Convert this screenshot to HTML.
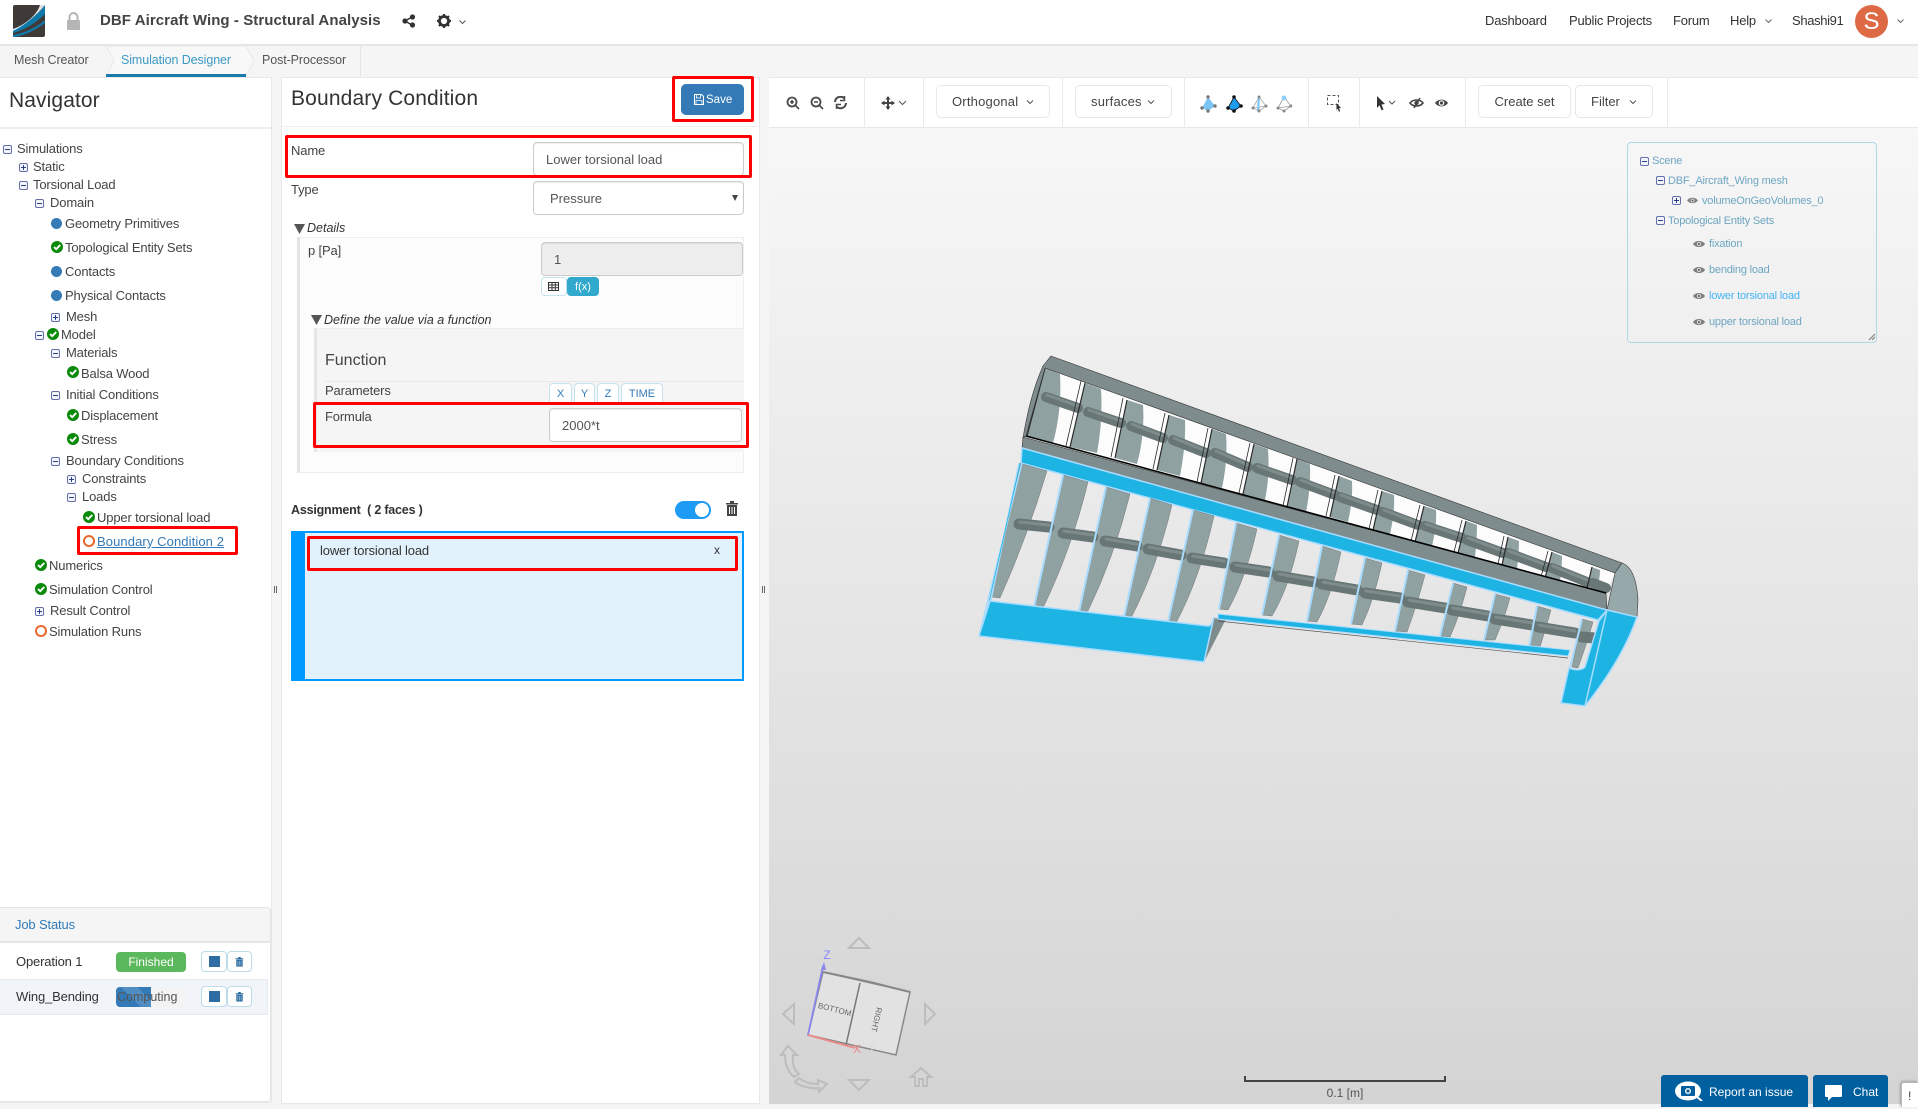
<!DOCTYPE html>
<html><head><meta charset="utf-8"><title>DBF Aircraft Wing - Structural Analysis</title>
<style>
html,body{margin:0;padding:0;width:1918px;height:1107px;overflow:hidden;background:#f5f5f5;font-family:"Liberation Sans",sans-serif;font-size:13px;color:#444}
.a{position:absolute;box-sizing:border-box}
.t{position:absolute;white-space:nowrap;height:18px;line-height:18px;letter-spacing:-.15px;margin-top:1px}
.m,.p{position:absolute;width:9px;height:9px;border:1px solid #6470ad;border-radius:2px;box-sizing:border-box;background:#f4f5fb}
.m:after,.p:after{content:"";position:absolute;left:1px;top:3px;width:5px;height:1px;background:#27408b}
.p:before{content:"";position:absolute;left:3px;top:1px;width:1px;height:5px;background:#27408b}
.d{position:absolute;width:11px;height:11px;border-radius:50%;background:#337ab7}
.r{position:absolute;width:12px;height:12px;border-radius:50%;border:2px solid #e8682c;box-sizing:border-box;background:#fff;margin-top:-1px}
.c{position:absolute;width:12px;height:12px;margin-top:-1px}
.red{position:absolute;box-sizing:border-box;border:3px solid #f00;border-radius:2px;z-index:5}
.inp{position:absolute;box-sizing:border-box;background:#fff;border:1px solid #ccc;border-radius:4px;font-size:13px;color:#555;line-height:34px;box-shadow:inset 0 1px 1px rgba(0,0,0,.075)}
.sep{position:absolute;top:77px;width:1px;height:51px;background:#eaeaea}
.btn{position:absolute;top:85px;height:33px;border:1px solid #e7e7e7;border-radius:5px;background:#fff;line-height:32px;color:#444;box-sizing:border-box;font-size:13px;white-space:nowrap;letter-spacing:.2px}
.pb{position:absolute;top:383px;height:19px;background:#fff;border:1px solid #c5e2ee;border-bottom:0;border-radius:4px 4px 0 0;color:#337ab7;font-size:11px;line-height:20px;text-align:center;box-sizing:border-box}
.s{position:absolute;color:#6ea6c2;font-size:11px;white-space:nowrap;height:16px;line-height:16px;letter-spacing:-.2px;margin-top:1px}
.n{position:absolute;top:12px;height:18px;line-height:18px;font-size:13px;color:#333;white-space:nowrap;letter-spacing:-.2px}
</style></head><body>
<svg width="0" height="0" style="position:absolute"><defs>
<symbol id="ck" viewBox="0 0 12 12"><circle cx="6" cy="6" r="6" fill="#0a8a0a"/><path d="M3 6l2.200 2.200L9.200 4" stroke="#fff" stroke-width="1.900" fill="none"/></symbol>
<symbol id="ey" viewBox="0 0 12 10"><path d="M0 5C2.500 1 9.500 1 12 5 9.500 9 2.500 9 0 5z" fill="#7f7f7f"/><circle cx="6" cy="5" r="2.100" fill="#dcdcdc"/><circle cx="6" cy="5" r="1.100" fill="#666"/></symbol>
<symbol id="tr" viewBox="0 0 14 16"><path d="M1 3h12v1.500H1zM5 1h4v2H5z" fill="#444"/><path d="M2 5h10v11H2z" fill="#444"/><path d="M4.500 7v7M7 7v7M9.500 7v7" stroke="#fff" stroke-width="1"/></symbol>
<symbol id="tb" viewBox="0 0 14 16"><path d="M1 3h12v1.500H1zM5 1h4v2H5z" fill="#2e6da4"/><path d="M2 5h10v11H2z" fill="#2e6da4"/><path d="M4.500 7v7M7 7v7M9.500 7v7" stroke="#a9c6de" stroke-width="1"/></symbol>
</defs></svg>

<!-- header -->
<div class="a" style="left:0;top:0;width:1918px;height:46px;background:#fff;border-bottom:2px solid #e6e6e6"></div>
<svg class="a" style="left:13px;top:5px" width="32" height="32" viewBox="0 0 32 32"><rect width="32" height="32" rx="2" fill="#3f3a37"/><path d="M0 24C12 20 24 10 32 0V9C24 17 12 25 0 28z" fill="#0f78ab"/><path d="M0 30C12 28 24 22 32 15v3C24 24 12 31 0 32z" fill="#0f78ab"/><path d="M0 24C12 20 24 10 27 0h5C24 10 12 20 0 26z" fill="#fff" opacity=".85"/></svg>
<svg class="a" style="left:66px;top:12px" width="15" height="18" viewBox="0 0 15 18"><path d="M3.500 8V5a4 4 0 018 0v3" stroke="#b5b5b5" stroke-width="2" fill="none"/><rect x="1" y="8" width="13" height="10" rx="1" fill="#b5b5b5"/></svg>
<div class="a" style="left:100px;top:11px;font-size:15px;font-weight:bold;color:#444;white-space:nowrap;line-height:20px;letter-spacing:.07px">DBF Aircraft Wing - Structural Analysis</div>
<svg class="a" style="left:402px;top:14px" width="14" height="14" viewBox="0 0 14 14"><circle cx="3" cy="7" r="2.600" fill="#333"/><circle cx="10.500" cy="3" r="2.600" fill="#333"/><circle cx="10.500" cy="11" r="2.600" fill="#333"/><path d="M3 7l7-4M3 7l7 4" stroke="#333" stroke-width="1.400"/></svg>
<svg class="a" style="left:437px;top:14px" width="14" height="14" viewBox="0 0 14 14"><circle cx="7" cy="7" r="4.500" fill="none" stroke="#333" stroke-width="2.800"/><path d="M7 0v3M7 11v3M0 7h3M11 7h3M2 2l2 2M10 10l2 2M12 2l-2 2M4 10l-2 2" stroke="#333" stroke-width="2.200"/></svg>
<svg class="a" style="left:459px;top:20px" width="7" height="5" viewBox="0 0 7 5"><path d="M.5.500l3 3 3-3" stroke="#555" fill="none"/></svg>
<div class="n" style="left:1485px">Dashboard</div>
<div class="n" style="left:1569px">Public Projects</div>
<div class="n" style="left:1673px">Forum</div>
<div class="n" style="left:1730px">Help</div>
<svg class="a" style="left:1765px;top:19px" width="7" height="5" viewBox="0 0 7 5"><path d="M.5.500l3 3 3-3" stroke="#666" fill="none"/></svg>
<div class="n" style="left:1792px;letter-spacing:-.35px">Shashi91</div>
<div class="a" style="left:1855px;top:5px;width:33px;height:33px;border-radius:50%;background:#dd6a45;color:#fff;font-size:24px;text-align:center;line-height:33px">S</div>
<svg class="a" style="left:1897px;top:19px" width="7" height="5" viewBox="0 0 7 5"><path d="M.5.500l3 3 3-3" stroke="#666" fill="none"/></svg>

<!-- tabs -->
<div class="a" style="left:14px;top:51px;font-size:12.500px;color:#555;line-height:18px;letter-spacing:-.1px">Mesh Creator</div>
<svg class="a" style="left:104px;top:46px" width="260" height="31" viewBox="0 0 260 31"><path d="M2 0H142l8 15-8 15H2l8-15z" fill="#f8f8f8" stroke="#e8e8e8"/><path d="M256.500 0v30" stroke="#e4e4e4"/></svg>
<div class="a" style="left:106px;top:74px;width:140px;height:3px;background:#1a7bab"></div>
<div class="a" style="left:121px;top:51px;font-size:12.500px;color:#3d9ac5;line-height:18px;letter-spacing:-.1px">Simulation Designer</div>
<div class="a" style="left:262px;top:51px;font-size:12.500px;color:#555;line-height:18px;letter-spacing:-.1px">Post-Processor</div>

<!-- navigator -->
<div class="a" style="left:0;top:77px;width:272px;height:1026px;background:#fff;border:1px solid #e8e8e8;border-left:0"></div>
<div class="a" style="left:0;top:127px;width:271px;height:2px;background:#eee"></div>
<div class="a" style="left:9px;top:88px;font-size:21px;color:#333;line-height:26px;letter-spacing:.1px">Navigator</div>

<i class="m" style="left:3px;top:145px"></i><div class="t" style="left:17px;top:139px">Simulations</div>
<i class="p" style="left:19px;top:163px"></i><div class="t" style="left:33px;top:157px">Static</div>
<i class="m" style="left:19px;top:181px"></i><div class="t" style="left:33px;top:175px">Torsional Load</div>
<i class="m" style="left:35px;top:199px"></i><div class="t" style="left:50px;top:193px">Domain</div>
<i class="d" style="left:51px;top:218px"></i><div class="t" style="left:65px;top:214px">Geometry Primitives</div>
<svg class="c" style="left:51px;top:242px"><use href="#ck"/></svg><div class="t" style="left:65px;top:238px">Topological Entity Sets</div>
<i class="d" style="left:51px;top:266px"></i><div class="t" style="left:65px;top:262px">Contacts</div>
<i class="d" style="left:51px;top:290px"></i><div class="t" style="left:65px;top:286px">Physical Contacts</div>
<i class="p" style="left:51px;top:313px"></i><div class="t" style="left:66px;top:307px">Mesh</div>
<i class="m" style="left:35px;top:331px"></i><svg class="c" style="left:47px;top:329px"><use href="#ck"/></svg><div class="t" style="left:61px;top:325px">Model</div>
<i class="m" style="left:51px;top:349px"></i><div class="t" style="left:66px;top:343px">Materials</div>
<svg class="c" style="left:67px;top:367px"><use href="#ck"/></svg><div class="t" style="left:81px;top:364px">Balsa Wood</div>
<i class="m" style="left:51px;top:391px"></i><div class="t" style="left:66px;top:385px">Initial Conditions</div>
<svg class="c" style="left:67px;top:410px"><use href="#ck"/></svg><div class="t" style="left:81px;top:406px">Displacement</div>
<svg class="c" style="left:67px;top:434px"><use href="#ck"/></svg><div class="t" style="left:81px;top:430px">Stress</div>
<i class="m" style="left:51px;top:457px"></i><div class="t" style="left:66px;top:451px">Boundary Conditions</div>
<i class="p" style="left:67px;top:475px"></i><div class="t" style="left:82px;top:469px">Constraints</div>
<i class="m" style="left:67px;top:493px"></i><div class="t" style="left:82px;top:487px">Loads</div>
<svg class="c" style="left:83px;top:512px"><use href="#ck"/></svg><div class="t" style="left:97px;top:508px">Upper torsional load</div>
<i class="r" style="left:83px;top:536px"></i><div class="t" style="left:97px;top:532px;color:#337ab7;text-decoration:underline;letter-spacing:.1px">Boundary Condition 2</div>
<div class="red" style="left:77px;top:526px;width:161px;height:29px"></div>
<svg class="c" style="left:35px;top:560px"><use href="#ck"/></svg><div class="t" style="left:49px;top:556px">Numerics</div>
<svg class="c" style="left:35px;top:584px"><use href="#ck"/></svg><div class="t" style="left:49px;top:580px">Simulation Control</div>
<i class="p" style="left:35px;top:607px"></i><div class="t" style="left:50px;top:601px">Result Control</div>
<i class="r" style="left:35px;top:626px"></i><div class="t" style="left:49px;top:622px">Simulation Runs</div>

<!-- job status -->
<div class="a" style="left:0;top:907px;width:271px;height:195px;border:1px solid #e4e4e4;border-left:0;border-radius:0 4px 4px 0;background:#fff"></div>
<div class="a" style="left:0;top:907px;width:270px;height:36px;background:#f5f5f5;border-bottom:2px solid #e6e6e6;border-top:1px solid #e4e4e4;border-radius:0 4px 0 0"></div>
<div class="t" style="left:15px;top:915px;color:#337ab7">Job Status</div>
<div class="a" style="left:0;top:979px;width:268px;height:36px;background:#f1f5fa;border:1px solid #e6e9ee;border-left:0"></div>
<div class="t" style="left:16px;top:952px;color:#333">Operation 1</div>
<div class="a" style="left:116px;top:952px;width:70px;height:20px;background:#5cb85c;border-radius:4px;color:#fff;font-size:12px;text-align:center;line-height:20px">Finished</div>
<div class="t" style="left:16px;top:987px;color:#333">Wing_Bending</div>
<div class="a" style="left:116px;top:987px;width:70px;height:20px;background:#f3f3f3;border-radius:4px;overflow:hidden"><div style="width:35px;height:20px;background:linear-gradient(45deg,#337ab7 45%,#4f8dc2 45%,#4f8dc2 75%,#337ab7 75%)"></div></div>
<div class="a" style="left:117px;top:987px;font-size:12.500px;line-height:20px;color:#555;white-space:nowrap">Computing</div>
<div class="a" style="left:201px;top:951px;width:26px;height:21px;border:1px solid #bcdcea;border-radius:4px;background:#fff"></div>
<div class="a" style="left:209px;top:956px;width:11px;height:11px;background:#2e6da4"></div>
<div class="a" style="left:227px;top:951px;width:25px;height:21px;border:1px solid #bcdcea;border-radius:4px;background:#fff"></div>
<svg class="a" style="left:235px;top:956px" width="9" height="11" viewBox="0 0 14 16"><use href="#tb"/></svg>
<div class="a" style="left:201px;top:986px;width:26px;height:21px;border:1px solid #bcdcea;border-radius:4px;background:#fff"></div>
<div class="a" style="left:209px;top:991px;width:11px;height:11px;background:#2e6da4"></div>
<div class="a" style="left:227px;top:986px;width:25px;height:21px;border:1px solid #bcdcea;border-radius:4px;background:#fff"></div>
<svg class="a" style="left:235px;top:991px" width="9" height="11" viewBox="0 0 14 16"><use href="#tb"/></svg>
<div class="a" style="left:274px;top:586px;width:3px;height:7px;border-left:1px solid #666;border-right:1px solid #666"></div>
<div class="a" style="left:762px;top:586px;width:3px;height:7px;border-left:1px solid #666;border-right:1px solid #666"></div>

<!-- middle panel -->
<div class="a" style="left:281px;top:77px;width:479px;height:1027px;background:#fff;border:1px solid #e8e8e8"></div>
<div class="a" style="left:282px;top:126px;width:477px;height:1px;background:#eee"></div>
<div class="a" style="left:291px;top:86px;font-size:21px;color:#333;line-height:26px;white-space:nowrap;letter-spacing:.15px">Boundary Condition</div>
<div class="a" style="left:681px;top:84px;width:63px;height:31px;background:#337ab7;border-radius:5px;color:#fff;font-size:11.500px;line-height:33px;padding-left:25px">Save</div>
<svg class="a" style="left:694px;top:94px" width="10" height="11" viewBox="0 0 10 11"><path d="M.5.500h7l2 2v8H.5z" fill="none" stroke="#fff"/><path d="M2.500 1v3h4V1M2 10V6.500h6V10" fill="none" stroke="#fff" stroke-width=".8"/></svg>
<div class="red" style="left:672px;top:76px;width:82px;height:46px"></div>
<div class="t" style="left:291px;top:141px">Name</div>
<div class="inp" style="left:533px;top:142px;width:211px;height:34px;padding-left:12px">Lower torsional load</div>
<div class="red" style="left:285px;top:135px;width:467px;height:43px"></div>
<div class="t" style="left:291px;top:180px">Type</div>
<div class="inp" style="left:533px;top:181px;width:211px;height:34px;padding-left:16px">Pressure</div>
<svg class="a" style="left:732px;top:195px" width="6" height="6" viewBox="0 0 6 6"><path d="M0 0h6L3 6z" fill="#444"/></svg>
<svg class="a" style="left:294px;top:224px" width="11" height="10" viewBox="0 0 11 10"><path d="M0 0h11L5.500 10z" fill="#555"/></svg>
<div class="t" style="left:307px;top:218px;font-style:italic;font-size:12.500px;color:#333;letter-spacing:0">Details</div>
<div class="a" style="left:297px;top:237px;width:447px;height:236px;background:#fcfcfc;border:1px solid #eee;border-left:3px solid #e6e6e6"></div>
<div class="t" style="left:308px;top:241px">p [Pa]</div>
<div class="inp" style="left:541px;top:242px;width:202px;height:34px;background:#eee;padding-left:12px">1</div>
<div class="a" style="left:541px;top:277px;width:26px;height:19px;border:1px solid #c5e2ee;border-radius:4px;background:#fff"></div>
<svg class="a" style="left:548px;top:282px" width="11" height="9" viewBox="0 0 11 9"><path d="M.5.500h10v8H.5zM.5 3h10M.5 5.700h10M4 .5v8M7.300.5v8" fill="none" stroke="#333"/></svg>
<div class="a" style="left:567px;top:277px;width:32px;height:19px;background:#31a9cc;border-radius:4px;color:#fff;font-size:11px;text-align:center;line-height:21px">f(x)</div>
<svg class="a" style="left:311px;top:315px" width="11" height="10" viewBox="0 0 11 10"><path d="M0 0h11L5.500 10z" fill="#555"/></svg>
<div class="t" style="left:324px;top:310px;font-style:italic;font-size:12.500px;color:#333;letter-spacing:0">Define the value via a function</div>
<div class="a" style="left:314px;top:328px;width:430px;height:124px;background:#f5f5f5;border-top:1px solid #eee;border-left:3px solid #e6e6e6"></div>
<div class="a" style="left:325px;top:351px;font-size:16px;color:#444;line-height:19px">Function</div>
<div class="a" style="left:325px;top:381px;width:418px;height:1px;background:#e8e8e8"></div>
<div class="t" style="left:325px;top:381px">Parameters</div>
<div class="pb" style="left:549px;width:23px">X</div><div class="pb" style="left:574px;width:21px">Y</div><div class="pb" style="left:597px;width:22px">Z</div><div class="pb" style="left:621px;width:42px">TIME</div>
<div class="t" style="left:325px;top:407px">Formula</div>
<div class="inp" style="left:549px;top:408px;width:193px;height:34px;padding-left:12px">2000*t</div>
<div class="red" style="left:313px;top:402px;width:436px;height:46px"></div>
<div class="t" style="left:291px;top:500px;font-weight:bold;font-size:12.500px;color:#333;letter-spacing:-.2px">Assignment &nbsp;( 2 faces )</div>
<div class="a" style="left:675px;top:501px;width:36px;height:18px;border-radius:9px;background:#1e9bf5"></div>
<div class="a" style="left:695px;top:503px;width:14px;height:14px;border-radius:50%;background:#fff"></div>
<svg class="a" style="left:725px;top:500px" width="14" height="16" viewBox="0 0 14 16"><use href="#tr"/></svg>
<div class="a" style="left:291px;top:531px;width:453px;height:150px;background:#e1f2fd;border:2px solid #0099ff;border-left:14px solid #0099ff"></div>
<div class="t" style="left:320px;top:541px;color:#333">lower torsional load</div>
<div class="t" style="left:714px;top:540px;color:#333;font-size:12px">x</div>
<div class="red" style="left:307px;top:536px;width:431px;height:35px"></div>

<!-- viewer -->
<div class="a" style="left:769px;top:128px;width:1149px;height:976px;background:linear-gradient(#f7f7f7,#d4d4d4)"></div>
<div class="a" style="left:769px;top:77px;width:1149px;height:51px;background:#fff;border-top:1px solid #e8e8e8;border-bottom:1px solid #e8e8e8"></div>
<svg class="a" style="left:786px;top:96px" width="65" height="15" viewBox="0 0 65 15" fill="none" stroke="#4a4a4a"><circle cx="6" cy="6" r="4.500" stroke-width="1.800"/><path d="M9.500 9.500l3.500 3.500M4 6h4M6 4v4" stroke-width="1.600"/><circle cx="30" cy="6" r="4.500" stroke-width="1.800"/><path d="M33.500 9.500l3.500 3.500M28 6h4" stroke-width="1.600"/><path d="M49 6a5.500 5.500 0 019.500-3.500M60 7a5.500 5.500 0 01-9.500 3.500" stroke-width="2"/><path d="M58.500 0v4.500h-4.500M50.500 13V8.500H55" stroke-width="1.500"/></svg>
<div class="sep" style="left:864px"></div>
<svg class="a" style="left:881px;top:96px" width="28" height="15" viewBox="0 0 28 15" fill="none"><path d="M7 1v12M1 7h12" stroke="#444" stroke-width="2"/><path d="M4.500 3.500L7 0l2.500 3.500zM4.500 10.500L7 14l2.500-3.500zM3.500 4.500L0 7l3.500 2.500zM10.500 4.500L14 7l-3.500 2.500z" fill="#444"/><path d="M18 5l3.500 3.500L25 5" stroke="#555"/></svg>
<div class="sep" style="left:923px"></div>
<div class="btn" style="left:936px;width:114px;padding-left:15px">Orthogonal</div>
<svg class="a" style="left:1026px;top:100px" width="8" height="5" viewBox="0 0 8 5"><path d="M1 .5l3 3 3-3" stroke="#555" fill="none"/></svg>
<div class="sep" style="left:1062px"></div>
<div class="btn" style="left:1075px;width:97px;padding-left:15px">surfaces</div>
<svg class="a" style="left:1147px;top:100px" width="8" height="5" viewBox="0 0 8 5"><path d="M1 .5l3 3 3-3" stroke="#555" fill="none"/></svg>
<div class="sep" style="left:1184px"></div>
<svg class="a" style="left:1200px;top:95px" width="92" height="18" viewBox="0 0 92 18">
<path d="M8 2L2 13l6 3 7-5z" fill="#7cc4f5"/><g fill="#777"><circle cx="8" cy="2" r="1.700"/><circle cx="2" cy="13" r="1.700"/><circle cx="8" cy="16" r="1.700"/><circle cx="15" cy="11" r="1.700"/></g>
<path d="M34 2l-6 11 6 3 7-5z" fill="#1e9bf0" stroke="#111" stroke-width=".8"/><g fill="#111"><circle cx="34" cy="2" r="1.800"/><circle cx="28" cy="13" r="1.800"/><circle cx="34" cy="16" r="1.800"/><circle cx="41" cy="11" r="1.800"/></g>
<path d="M59 2l-6 11 6 3 7-5zM59 2v14M53 13l13-2" fill="none" stroke="#aaa" stroke-width=".8"/><path d="M59 2l-1 14" stroke="#7cc4f5" stroke-width="2"/><g fill="#888"><circle cx="59" cy="2" r="1.500"/><circle cx="53" cy="13" r="1.500"/><circle cx="59" cy="16" r="1.500"/><circle cx="66" cy="11" r="1.500"/></g>
<path d="M84 2l-6 11 6 3 7-5z" fill="none" stroke="#999" stroke-width=".8"/><path d="M78 13l13-2" stroke="#999" stroke-width=".8"/><circle cx="84" cy="3" r="2.500" fill="#8fd0fb"/><g fill="#888"><circle cx="78" cy="13" r="1.500"/><circle cx="84" cy="16" r="1.500"/><circle cx="91" cy="11" r="1.500"/></g></svg>
<div class="sep" style="left:1308px"></div>
<svg class="a" style="left:1327px;top:95px" width="15" height="17" viewBox="0 0 15 17"><path d="M.5.500h11v9H.5z" fill="none" stroke="#555" stroke-dasharray="3 2"/><path d="M9.500 8l4.500 5-2 .3 1.200 3-1.200.5-1.300-3-1.200 1.200z" fill="#333"/></svg>
<div class="sep" style="left:1359px"></div>
<svg class="a" style="left:1376px;top:95px" width="80" height="16" viewBox="0 0 80 16"><path d="M1 1l8 8-3.500.5 2 5-2 .8-2-5L1 13z" fill="#333"/><path d="M13 6l3 3 3-3" stroke="#555" fill="none"/><path d="M34 8c3-4 10-4 13 0-3 4-10 4-13 0z" fill="none" stroke="#444" stroke-width="1.600"/><circle cx="40.500" cy="8" r="2.200" fill="#444"/><path d="M44 3l-6 10" stroke="#444" stroke-width="1.500"/><path d="M59 8c3-4.500 10-4.500 13 0-3 4.500-10 4.500-13 0z" fill="#444"/><circle cx="65.500" cy="8" r="2.800" fill="#fff"/><circle cx="65.500" cy="8" r="1.600" fill="#444"/></svg>
<div class="sep" style="left:1465px"></div>
<div class="btn" style="left:1478px;width:93px;text-align:center;letter-spacing:0">Create set</div>
<div class="btn" style="left:1575px;width:78px;padding-left:15px;letter-spacing:0">Filter</div>
<svg class="a" style="left:1629px;top:100px" width="8" height="5" viewBox="0 0 8 5"><path d="M1 .5l3 3 3-3" stroke="#555" fill="none"/></svg>
<div class="sep" style="left:1667px"></div>

<!-- scene tree -->
<div class="a" style="left:1627px;top:142px;width:250px;height:201px;border:1px solid #add8e6;border-radius:4px;background:rgba(255,255,255,.02)"></div>
<svg class="a" style="left:1868px;top:333px" width="8" height="8" viewBox="0 0 8 8"><path d="M1 7l6-6M4 7l3-3" stroke="#777" fill="none"/></svg>
<i class="m" style="left:1640px;top:157px"></i><div class="s" style="left:1652px;top:152px">Scene</div>
<i class="m" style="left:1656px;top:176px"></i><div class="s" style="left:1668px;top:172px">DBF_Aircraft_Wing mesh</div>
<i class="p" style="left:1672px;top:196px"></i><svg class="a" style="left:1687px;top:196px" width="11" height="9"><use href="#ey"/></svg><div class="s" style="left:1702px;top:192px">volumeOnGeoVolumes_0</div>
<i class="m" style="left:1656px;top:216px"></i><div class="s" style="left:1668px;top:212px">Topological Entity Sets</div>
<svg class="a" style="left:1693px;top:239px" width="12" height="10"><use href="#ey"/></svg><div class="s" style="left:1709px;top:235px">fixation</div>
<svg class="a" style="left:1693px;top:265px" width="12" height="10"><use href="#ey"/></svg><div class="s" style="left:1709px;top:261px">bending load</div>
<svg class="a" style="left:1693px;top:291px" width="12" height="10"><use href="#ey"/></svg><div class="s" style="left:1709px;top:287px;color:#45b4f5">lower torsional load</div>
<svg class="a" style="left:1693px;top:317px" width="12" height="10"><use href="#ey"/></svg><div class="s" style="left:1709px;top:313px">upper torsional load</div>

<!-- wing -->
<svg class="a" style="left:0;top:0" width="1918" height="1107" viewBox="0 0 1918 1107">
<!-- upper white openings -->
<path d="M1045 368L1615 573L1606 593L1026 436Z" fill="#fcfcfc"/>
<!-- upper ribs -->
<path fill="#90a1a2" d="M1045 368L1060 374Q1062 410 1053 443L1027 436ZM1085 383L1101 389Q1103 420 1097 453L1070 447ZM1127 400L1143 405Q1145 435 1137 464L1115 458ZM1169 415L1185 420Q1186 445 1180 476L1157 470ZM1212 429L1226 434Q1228 460 1222 488L1201 483ZM1254 444L1268 449Q1270 475 1265 500L1243 494ZM1297 459L1310 464Q1311 488 1306 512L1287 507ZM1339 476L1352 481Q1353 500 1348 522L1330 517ZM1382 491L1394 495Q1395 512 1390 534L1373 530ZM1424 506L1436 510Q1437 525 1432 546L1415 542ZM1466 521L1477 525Q1477 540 1475 557L1458 553ZM1508 537L1519 541Q1519 552 1517 569L1502 565ZM1552 552L1562 556Q1562 565 1560 582L1545 578ZM1592 567L1600 570Q1600 578 1597 590L1587 588Z"/>
<!-- upper rods -->
<g stroke-linecap="round" stroke="#697676" stroke-width="10">
<path d="M1046 397L1078 408M1088 412L1121 423M1131 426L1163 438M1173 440L1206 453M1215 453L1248 467M1257 468L1292 480M1300 482L1335 495M1340 497L1377 510M1383 512L1418 525M1425 526L1462 538M1467 540L1503 553M1508 553L1546 567M1552 568L1587 582M1593 583L1606 588"/></g>
<g stroke-linecap="round" stroke="#7f8c8c" stroke-width="3">
<path d="M1047 395L1078 406M1089 410L1121 421M1132 424L1163 436M1174 438L1206 451M1216 451L1248 465M1258 466L1292 478M1301 480L1335 493M1341 495L1377 508M1384 510L1418 523M1426 524L1462 536M1468 538L1503 551M1509 551L1546 565M1553 566L1587 580"/></g>
<!-- dark rib edges in upper bay -->
<path fill="none" stroke="#2a2a2a" stroke-width="1.200" d="M1045 368L1027 436M1085 383L1070 447M1127 400L1115 458M1169 415L1157 470M1212 429L1201 483M1254 444L1243 494M1297 459L1287 507M1339 476L1330 517M1382 491L1373 530M1424 506L1415 542M1466 521L1458 553M1508 537L1502 565M1552 552L1545 578M1592 567L1587 588"/>
<path fill="none" stroke="#2a2a2a" stroke-width=".8" d="M1081 381L1066 446M1123 398L1111 457M1165 413L1153 469M1208 428L1197 482M1250 443L1239 493M1293 458L1283 506M1335 475L1326 516M1378 490L1369 529M1420 505L1411 541M1462 520L1454 552M1504 536L1498 564M1548 551L1541 577"/>
<!-- top band, lower grey band -->
<path d="M1051 356L1622 563L1615 573L1045 368L1026 436L1023 438Q1030 395 1043 366Z" fill="#7e8c8d" stroke="#333" stroke-width=".6"/>
<path d="M1023 437L1606 593L1607 610L1022 448Z" fill="#7e8c8d" stroke="#333" stroke-width=".6"/>
<path d="M1026 436L1606 593" stroke="#000" stroke-width="1.500" fill="none"/>
<path d="M1622 563Q1636 568 1638 600L1637 617L1607 610L1615 573Z" fill="#97a8aa" stroke="#333" stroke-width=".6"/>
<!-- blue band -->
<path d="M1022 448L1607 610L1598 620L1021 463Z" fill="#1db4e4" stroke="#a8dcff" stroke-width="1.500"/>
<!-- lower ribs -->
<path fill="#90a1a2" stroke="#666" stroke-width=".4" d="M1019 463L1047 471Q1027 538 1000 598L992 597ZM1063 475L1088 482Q1072 548 1043 608L1034 607ZM1106 487L1130 494Q1114 558 1087 613L1079 612ZM1150 498L1172 505Q1157 568 1131 618L1124 617ZM1193 510L1214 516Q1200 578 1176 623L1168 622ZM1236 523L1257 529Q1246 578 1228 610L1219 609ZM1279 535L1299 541Q1289 588 1272 616L1262 615ZM1322 546L1341 552Q1332 595 1317 622L1307 621ZM1365 558L1382 563Q1374 600 1362 625L1351 624ZM1408 570L1425 575Q1417 605 1407 632L1395 631ZM1453 583L1467 587Q1460 615 1450 637L1440 636ZM1495 594L1510 598Q1504 620 1495 640L1484 640ZM1537 606L1551 610Q1546 628 1540 647L1529 647ZM1582 619L1593 622Q1588 640 1578 668L1572 667Z"/>
<!-- lower rods -->
<g stroke-linecap="round" stroke="#697676" stroke-width="11">
<path d="M1019 524L1049 527M1063 533L1093 537M1105 541L1137 546M1148 549L1181 555M1192 558L1224 563M1235 567L1269 572M1278 576L1314 582M1322 584L1357 590M1365 593L1400 598M1408 602L1445 608M1452 610L1488 616M1495 619L1532 625M1538 627L1575 633M1582 637L1595 638"/></g>
<g stroke-linecap="round" stroke="#7f8c8c" stroke-width="3">
<path d="M1020 522L1049 525M1064 531L1093 535M1106 539L1137 544M1149 547L1181 553M1193 556L1224 561M1236 565L1269 570M1279 574L1314 580M1323 582L1357 588M1366 591L1400 596M1409 600L1445 606M1453 608L1488 614M1496 617L1532 623M1539 625L1575 631"/></g>
<!-- light blue rib lines -->
<path fill="none" stroke="#a8dcff" stroke-width="2" d="M1063 475L1034 607M1106 487L1079 612M1150 498L1124 617M1193 510L1168 622M1236 523L1219 609M1279 535L1262 615M1322 546L1307 621M1365 558L1351 624M1408 570L1395 631M1453 583L1440 636M1495 594L1484 640M1537 606L1529 647M1582 619L1570 668"/>
<path fill="none" stroke="#a8dcff" stroke-width="1.500" d="M1022 463L979 636M1019 463L991 600"/>
<path fill="none" stroke="#1db4e4" stroke-width=".8" d="M1020 464L985 620"/>
<!-- bottom panel, strip and tip -->
<path d="M1213 618L1226 619L1204 662Z" fill="#7e8c8d"/>
<path d="M979 636L990 601L1208 626Q1212 626 1214 617L1204 662Z" fill="#1db4e4" stroke="#a8dcff" stroke-width="1.500"/>
<path d="M1218 614L1570 650L1568 656L1218 619Z" fill="#1db4e4" stroke="#a8dcff" stroke-width="1"/>
<path d="M1218 621L1568 658" fill="none" stroke="#555" stroke-width=".7"/>
<path d="M1607 610L1637 617Q1622 660 1585 706L1561 703L1569 668Q1580 672 1585 667L1599 621Z" fill="#1db4e4" stroke="#a8dcff" stroke-width="1.500"/>
<path d="M1607 610L1585 706" stroke="#a8dcff" stroke-width="1.500" fill="none"/>
</svg>

<!-- gizmo -->
<svg class="a" style="left:770px;top:920px" width="240" height="187" viewBox="0 0 240 187">
<g fill="none" stroke="#bdbdbd" stroke-width="2"><path d="M89 18L79 28H99ZM24 84L13 94L24 104ZM155 84V104L165 94ZM79 160H99L89 170Z"/><path d="M141 157L151 148L161 157H157V166H153V159H149V166H145V157Z"/><path d="M18 126L27 135H23C22 143 24 150 29 154L24 157C18 152 15 144 15 135H11Z"/><path d="M29 158C34 162 41 164 48 164V160L57 164 49 172V168C39 169 30 166 25 162Z"/></g>
<path d="M53 52L140 72L126 135L38 115Z" fill="#e2e2e2" stroke="#888" stroke-width="1.500"/>
<path d="M90 63L76 125" stroke="#777" stroke-width="1.500"/>
<path d="M53 52L100 62L140 72" stroke="#888" fill="none" stroke-width="2"/>
<path d="M38 115L53 46" stroke="#8888ee" stroke-width="1.800"/><path d="M51 50L54 42L56 50Z" fill="#8888ee"/>
<path d="M38 115L85 128" stroke="#ee8888" stroke-width="1.800"/>
<text x="57" y="39" font-family="Liberation Sans" font-size="12" fill="#8888ff" text-anchor="middle">Z</text>
<text x="87" y="133" font-family="Liberation Sans" font-size="12" fill="#ee8888" text-anchor="middle">X</text>
<text x="102" y="131" font-family="Liberation Sans" font-size="10" fill="#cfe3cf" text-anchor="middle">Y</text>
<text transform="translate(64,92) rotate(14)" font-family="Liberation Sans" font-size="8" fill="#666" text-anchor="middle">BOTTOM</text>
<text transform="translate(104,99) rotate(103)" font-family="Liberation Sans" font-size="8" fill="#666" text-anchor="middle">RIGHT</text>
</svg>

<!-- scale + footer buttons -->
<div class="a" style="left:1244px;top:1076px;width:202px;height:6px;border:2px solid #444;border-top:0"></div>
<div class="a" style="left:1300px;top:1085px;width:90px;text-align:center;font-size:12px;color:#555;line-height:16px">0.1 [m]</div>
<div class="a" style="left:0;top:1104px;width:1918px;height:3px;background:#f5f5f5"></div>
<div class="a" style="left:1661px;top:1075px;width:147px;height:32px;background:#005f9e;border-radius:3px 3px 0 0;color:#fff;font-size:12px;line-height:34px;padding-left:48px;white-space:nowrap">Report an issue</div>
<svg class="a" style="left:1675px;top:1081px" width="28" height="20" viewBox="0 0 28 20"><ellipse cx="13" cy="10" rx="13" ry="9.500" fill="#fff"/><path d="M22 16l5 4" stroke="#fff" stroke-width="2"/><rect x="6" y="5" width="14" height="10" rx="1" fill="#005f9e"/><circle cx="13" cy="10" r="3" fill="#fff"/><circle cx="13" cy="10" r="1.600" fill="#005f9e"/></svg>
<div class="a" style="left:1813px;top:1075px;width:75px;height:32px;background:#005f9e;border-radius:3px 3px 0 0;color:#fff;font-size:12px;line-height:34px;padding-left:40px">Chat</div>
<svg class="a" style="left:1825px;top:1085px" width="17" height="16" viewBox="0 0 17 16"><path d="M1 0h15a1 1 0 011 1v10a1 1 0 01-1 1H7l-4 4v-4H1a1 1 0 01-1-1V1a1 1 0 011-1z" fill="#fff"/></svg>
<div class="a" style="left:1901px;top:1082px;width:17px;height:25px;background:#fff;border:1px solid #bbb;border-right:0;border-bottom:0;border-radius:3px 0 0 0;box-shadow:-1px -1px 2px rgba(0,0,0,.25);font-size:12px;line-height:26px;padding-left:6px;color:#444">!</div>
</body></html>
